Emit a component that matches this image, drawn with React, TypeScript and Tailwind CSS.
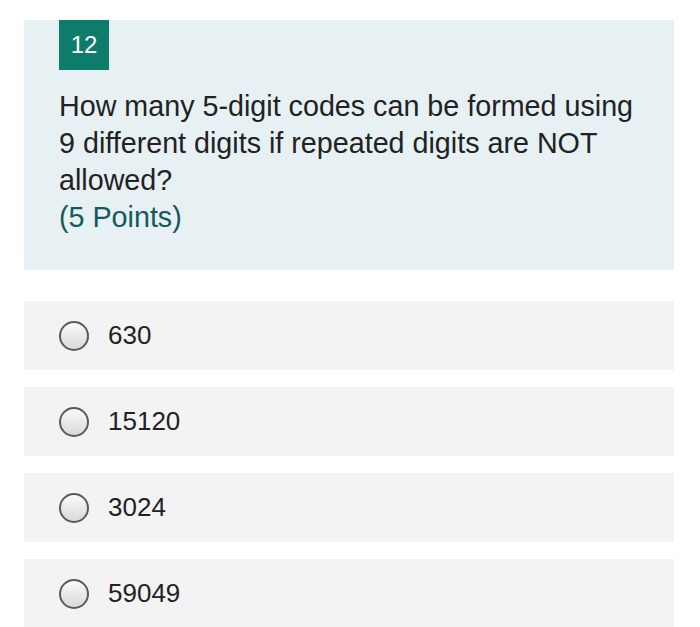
const OPTIONS = ['630', '15120', '3024', '59049'];

function Radio() {
  return (
    <span className="block w-[30px] h-[30px] rounded-full border-2 border-[#5a5a5a] bg-gradient-to-b from-[#fafafa] to-[#d9d9d9] shrink-0" />
  );
}

export default function App() {
  return (
    <div className="w-[700px] h-[627px] bg-white overflow-hidden pt-[20px] pl-[24px] pr-[26px] font-['Liberation_Sans',Arial,sans-serif]">
      <div className="bg-[#e7f1f3] h-[250px] pl-[35px] pr-[20px]">
        <div className="w-[50px] h-[50px] bg-[#0e7c6b] text-white text-[24px] flex items-center justify-center">
          12
        </div>
        <p className="mt-[18px] text-[28.7px] leading-[37px] text-[#222]">
          How many 5-digit codes can be formed using 9 different digits if repeated digits are NOT allowed?
        </p>
        <p className="text-[28.7px] leading-[37px] text-[#155a5c]">(5 Points)</p>
      </div>
      <div className="mt-[31px] flex flex-col gap-[17px]">
        {OPTIONS.map((o) => (
          <div key={o} className="bg-[#f3f3f3] h-[69px] pl-[35px] flex items-center gap-[19px]">
            <Radio />
            <span className="text-[26px] text-[#222]">{o}</span>
          </div>
        ))}
      </div>
    </div>
  );
}
